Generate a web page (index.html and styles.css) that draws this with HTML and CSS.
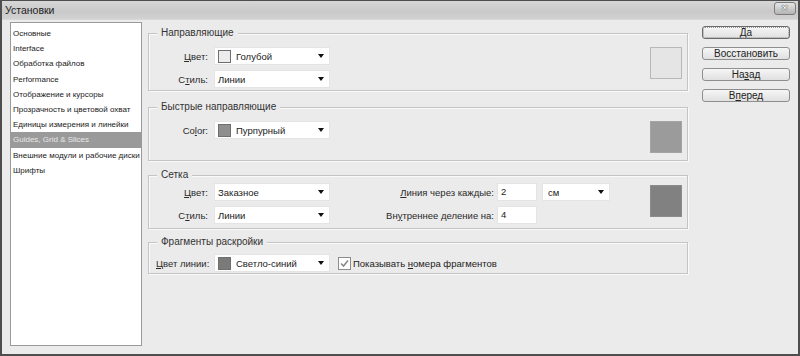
FILE: index.html
```html
<!DOCTYPE html>
<html lang="ru">
<head>
    <meta charset="UTF-8">
    <meta name="viewport" content="width=device-width, initial-scale=1.0">
    <link rel="stylesheet" href="styles.css">
</head>
<body>
    <div class="window">
        <div class="titlebar">
            <span class="title">Установки</span>
            <span class="close-button">✕</span>
        </div>
        <div class="window-body">
            <ul class="nav-list">
                <li class="nav-item">Основные</li>
                <li class="nav-item">Interface</li>
                <li class="nav-item">Обработка файлов</li>
                <li class="nav-item">Performance</li>
                <li class="nav-item">Отображение и курсоры</li>
                <li class="nav-item">Прозрачность и цветовой охват</li>
                <li class="nav-item">Единицы измерения и линейки</li>
                <li class="nav-item selected">Guides, Grid &amp; Slices</li>
                <li class="nav-item">Внешние модули и рабочие диски</li>
                <li class="nav-item">Шрифты</li>
            </ul>

            <div class="panel">
                <div class="group group-guides">
                    <span class="group-title">Направляющие</span>
                    <div class="group-fields">
                        <div class="field-row">
                            <span class="field-label"><u>Ц</u>вет:</span>
                            <div class="select">
                                <span class="chip chip-light"></span>
                                <span class="select-text">Голубой</span>
                                <span class="arrow"></span>
                            </div>
                        </div>
                        <div class="field-row">
                            <span class="field-label">С<u>т</u>иль:</span>
                            <div class="select">
                                <span class="select-text">Линии</span>
                                <span class="arrow"></span>
                            </div>
                        </div>
                    </div>
                    <div class="swatch swatch-light"></div>
                </div>

                <div class="group group-smart">
                    <span class="group-title">Быстрые направляющие</span>
                    <div class="group-fields">
                        <div class="field-row">
                            <span class="field-label">Co<u>l</u>or:</span>
                            <div class="select">
                                <span class="chip chip-mid"></span>
                                <span class="select-text">Пурпурный</span>
                                <span class="arrow"></span>
                            </div>
                        </div>
                    </div>
                    <div class="swatch swatch-mid"></div>
                </div>

                <div class="group group-grid">
                    <span class="group-title">Сетка</span>
                    <div class="group-fields">
                        <div class="field-row">
                            <span class="field-label"><u>Ц</u>вет:</span>
                            <div class="select">
                                <span class="select-text">Заказное</span>
                                <span class="arrow"></span>
                            </div>
                            <span class="field-label wide"><u>Л</u>иния через каждые:</span>
                            <div class="text-input">2</div>
                            <div class="select small">
                                <span class="select-text">см</span>
                                <span class="arrow"></span>
                            </div>
                        </div>
                        <div class="field-row">
                            <span class="field-label">С<u>т</u>иль:</span>
                            <div class="select">
                                <span class="select-text">Линии</span>
                                <span class="arrow"></span>
                            </div>
                            <span class="field-label wide">Вн<u>у</u>треннее деление на:</span>
                            <div class="text-input">4</div>
                        </div>
                    </div>
                    <div class="swatch swatch-dark"></div>
                </div>

                <div class="group group-slices">
                    <span class="group-title">Фрагменты раскройки</span>
                    <div class="group-fields">
                        <div class="field-row">
                            <span class="field-label"><u>Ц</u>вет линии:</span>
                            <div class="select">
                                <span class="chip chip-dark"></span>
                                <span class="select-text">Светло-синий</span>
                                <span class="arrow"></span>
                            </div>
                            <span class="checkbox">
                                <svg width="9" height="9" viewBox="0 0 9 9"><polyline points="1,4.5 3.5,7 8,1.5" fill="none" stroke="#8a8a8a" stroke-width="1.6"/></svg>
                            </span>
                            <span class="checkbox-label">Показывать <u>н</u>омера фрагментов</span>
                        </div>
                    </div>
                </div>
            </div>

            <div class="actions">
                <button class="action-button default">Да</button>
                <button class="action-button">Восстановить</button>
                <button class="action-button">На<u>з</u>ад</button>
                <button class="action-button">В<u>п</u>еред</button>
            </div>
        </div>
    </div>
</body>
</html>
```

FILE: styles.css
```css
body {
    margin: 0;
    font-family: "Liberation Sans", Arial, sans-serif;
    font-size: 9.5px;
    color: #222;
}
.window {
    width: 800px;
    height: 356px;
    box-sizing: border-box;
    background-color: #ebebeb;
    border: 2px solid #4e4e4e;
    border-top-width: 1px;
}
.titlebar {
    height: 19px;
    display: flex;
    align-items: center;
    padding: 0 2px 0 3px;
    background: linear-gradient(#d6d6d6, #c9c9c9 60%, #d2d2d2);
    border-bottom: 1px solid #d8d8d8;
    box-sizing: border-box;
}
.title {
    font-size: 10.5px;
    color: #1e1e1e;
}
.close-button {
    margin-left: auto;
    width: 20px;
    height: 11px;
    margin-top: -3px;
    border: 1px solid #7c7c7c;
    border-radius: 3px;
    background: linear-gradient(#e6e6e6, #b4b4b4);
    color: #fff;
    font-size: 9px;
    line-height: 11px;
    text-align: center;
    text-shadow: 0 0 1px #333, 0 0 1px #333;
}
.window-body {
    display: flex;
    align-items: flex-start;
    padding: 2px 0 0 8px;
}

/* left list of sections */
.nav-list {
    list-style: none;
    margin: 0;
    padding: 3px 0 0;
    width: 132px;
    height: 324px;
    box-sizing: border-box;
    background-color: #fff;
    border: 1px solid #9a9a9a;
}
.nav-item {
    font-size: 8px;
    line-height: 15.2px;
    padding-left: 2px;
    white-space: nowrap;
    color: #1a1a1a;
}
.nav-item.selected {
    background-color: #9a9a9a;
    color: #e8e8e8;
}

/* settings groups */
.panel {
    width: 540px;
    margin-left: 6px;
    padding-top: 11px;
}
.group {
    position: relative;
    display: flex;
    align-items: flex-start;
    border: 1px solid #c4c4c4;
    box-shadow: inset 1px 1px 0 #fafafa, 1px 1px 0 #fafafa;
    padding: 13px 5px 2px 7px;
}
.group-title {
    position: absolute;
    top: -7px;
    left: 8px;
    padding: 0 4px;
    line-height: 12px;
    font-size: 10px;
    background-color: #ebebeb;
    color: #333;
}
.group-smart {
    margin-top: 16px;
    padding-bottom: 2px;
}
.group-grid {
    margin-top: 14px;
    padding-top: 7px;
    padding-bottom: 4px;
}
.group-slices {
    margin-top: 13px;
    padding-top: 11px;
    padding-bottom: 1px;
}
.group-fields {
    display: flex;
    flex-direction: column;
    gap: 5px;
}
.field-row {
    display: flex;
    align-items: center;
    height: 18px;
}
.field-label {
    width: 52px;
    margin-right: 6px;
    text-align: right;
    white-space: nowrap;
    color: #2a2a2a;
}
.field-label.wide {
    width: 158px;
    margin-left: 6px;
    margin-right: 3px;
}
.select {
    width: 116px;
    height: 18px;
    box-sizing: border-box;
    display: flex;
    align-items: center;
    padding: 0 5px 0 3px;
    background-color: #fff;
    border: 1px solid #e4e4e4;
}
.select.small {
    width: 68px;
    margin-left: 5px;
    padding-left: 5px;
}
.select-text {
    white-space: nowrap;
}
.chip {
    width: 11px;
    height: 11px;
    margin-right: 5px;
    border: 1px solid #6e6e6e;
}
.chip-light { background-color: #ececec; }
.chip-mid { background-color: #8e8e8e; }
.chip-dark { background-color: #7a7a7a; }
.arrow {
    margin-left: auto;
    width: 0;
    height: 0;
    border-left: 3.5px solid transparent;
    border-right: 3.5px solid transparent;
    border-top: 4px solid #111;
}
.text-input {
    width: 40px;
    height: 18px;
    box-sizing: border-box;
    padding-left: 3px;
    line-height: 16px;
    background-color: #fff;
    border: 1px solid #e4e4e4;
}
.swatch {
    width: 32px;
    height: 32px;
    box-sizing: border-box;
    margin-left: auto;
    margin-bottom: 5px;
    border: 1px solid #b8b8b8;
}
.swatch-light { background-color: #e5e5e5; }
.swatch-mid { background-color: #9b9b9b; border-color: #a4a4a4; }
.swatch-dark { background-color: #818181; border-color: #8c8c8c; margin-top: 2px; }
.checkbox {
    width: 13px;
    height: 13px;
    box-sizing: border-box;
    margin-left: 8px;
    margin-right: 2px;
    display: flex;
    align-items: center;
    justify-content: center;
    background-color: #fff;
    border: 1px solid #8c8c8c;
}
.checkbox-label {
    white-space: nowrap;
}

/* buttons on the right */
.actions {
    display: flex;
    flex-direction: column;
    gap: 8px;
    width: 88px;
    margin-left: 14px;
    margin-top: 4px;
}
.action-button {
    height: 13px;
    padding: 0;
    font-family: inherit;
    font-size: 10px;
    line-height: 11px;
    color: #222;
    border: 1px solid #8e8e8e;
    border-radius: 3px;
    background: linear-gradient(#f6f6f6, #e0e0e0);
}
.action-button.default {
    border-color: #6a6a6a;
    outline: 1px dotted #9a9a9a;
    outline-offset: -2px;
}
```
